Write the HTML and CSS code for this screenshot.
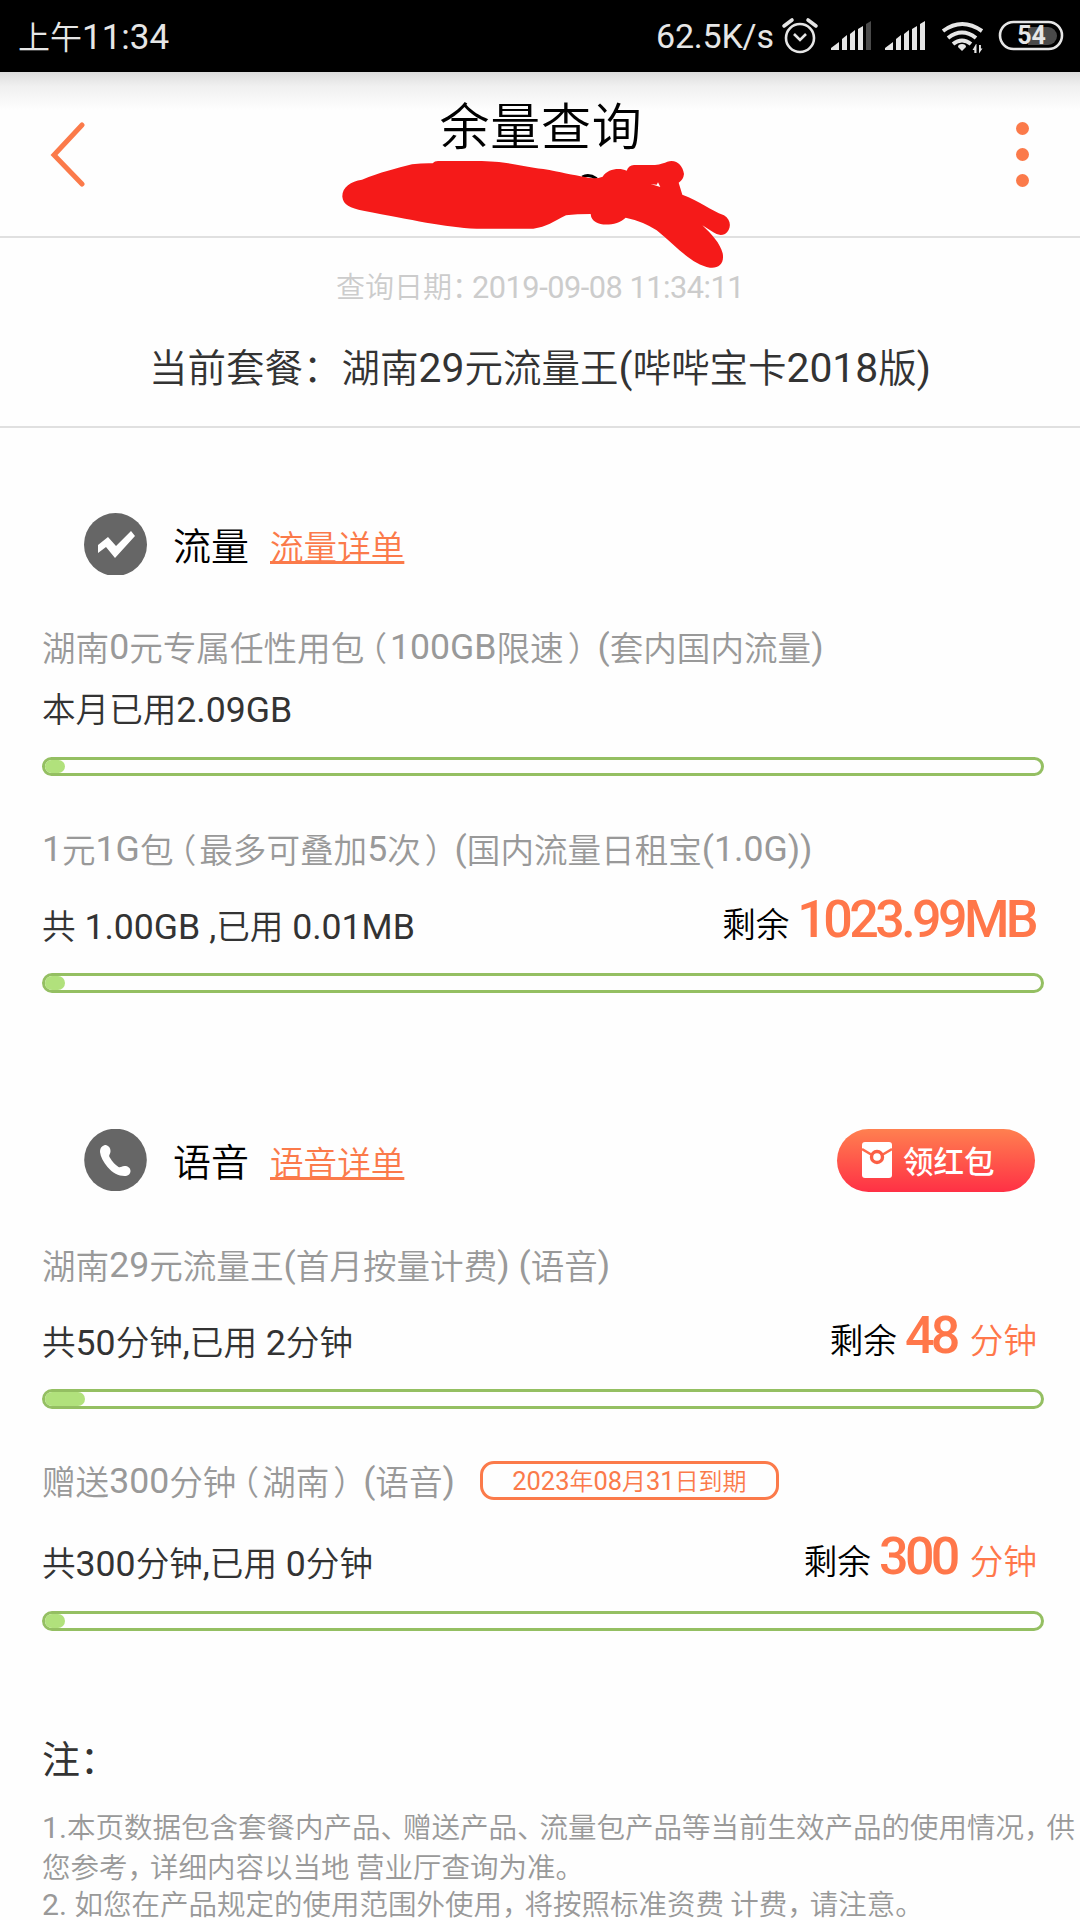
FILE: index.html
```html
<!DOCTYPE html>
<html lang="zh-CN">
<head>
<meta charset="utf-8">
<title>余量查询</title>
<link rel="stylesheet" href="styles.css">
</head>
<body>
<div class="status">
  <span class="clock">上午<span class="n">11:34</span></span>
  <span class="speed">62.5K/s</span>
  <svg class="status-icons" width="274" height="72" viewBox="0 0 274 72" fill="none" stroke="#e6e6e6">
    <circle cx="14" cy="38" r="14" stroke-width="2.6"/>
    <path d="M8 34l6 6 6-6" stroke-width="2.6"/>
    <path d="M-2 26l8-6M30 26l-8-6" stroke-width="3.6" stroke-linecap="round"/>
    <g fill="#e6e6e6" stroke="none">
      <path d="M45 50v-2l8-6v8zM56 39l5-4v15h-5zM64 34l5-4v20h-5zM72 29l5-3v24h-5z"/>
      <path fill="#4a4a4a" d="M80 24l5-3v29h-5z"/>
      <path d="M99 50v-2l8-6v8zM110 39l5-4v15h-5zM118 34l5-4v20h-5zM126 29l5-3v24h-5zM134 24l5-3v29h-5z"/>
      <path d="M176 44q4 0 4 3l-4 4-4-4q0-3 4-3z"/>
      <path d="M190 44l-3.500 6h1.800v3h2.200V44zM193 45v8.500l3.500-5h-1.600v-3.500z"/>
    </g>
    <path d="M157 31q19-14 39 0M162 38q14-11 28 0M167 44q9-7 18 0" stroke-width="4"/>
    <rect x="214" y="22" width="62" height="27" rx="13.5" stroke-width="2.6"/>
  </svg>
  <div class="battery">54</div>
</div>

<header class="header">
  <svg class="back" width="40" height="66" viewBox="0 0 40 66"><path d="M34 4L6 34l28 29" fill="none" stroke="#fb7a4a" stroke-width="5" stroke-linecap="round"/></svg>
  <h1>余量查询</h1>
  <div class="more"><i></i><i></i><i></i></div>
  <svg class="scribble" width="420" height="240" viewBox="0 0 1260 720">
    <path d="M757 291Q776 280 800 296" fill="none" stroke="#000" stroke-width="9"/>
    <path fill="#f51a19" fill-rule="evenodd" d="M37 350C36 322 62 304 96 299C150 277 200 265 246 253Q280 249 308 250Q314 243 324 243H440C530 243 570 258 640 267C690 276 730 285 765 291Q795 299 818 290C832 267 868 262 890 272Q896 256 912 255H975Q1000 251 1012 245C1040 237 1058 256 1062 282Q1060 300 1046 308L1057 344C1110 364 1140 389 1182 406C1206 420 1204 450 1185 462Q1168 470 1150 457L1117 436C1146 463 1170 490 1178 520C1184 552 1165 566 1140 563C1084 553 1040 500 980 451Q940 424 887 413C866 434 820 440 798 427Q783 418 782 402Q740 402 708 406C670 424 650 442 610 446H440C340 441 250 420 100 392C60 384 39 374 37 350ZM962 312L980 314 984 307 991 321Z"/>
  </svg>
</header>

<section class="plan">
  <p class="date">查询日期<span class="colon">：</span><span class="n">2019-09-08 11:34:11</span></p>
  <p class="name">当前套餐：湖南<span class="n">29</span>元流量王<span class="n">(</span>哔哔宝卡<span class="n">2018</span>版<span class="n">)</span></p>
</section>

<main>
  <div class="head">
    <svg width="63" height="62" viewBox="0 0 63 62"><circle cx="31.5" cy="31.5" r="31.5" fill="#666"/><path d="M14 32L24 24l8 9L47 18l4 5-20 22-9-11-8 6z" fill="#fff"/></svg>
    <h2>流量</h2><a>流量详单</a>
  </div>
  <p class="desc">湖南<span class="n">0</span>元专属任性用包<span class="fl">（</span><span class="n">100GB</span>限速<span class="fr">）</span><span class="n">(</span>套内国内流量<span class="n">)</span></p>
  <div class="row used-only"><span>本月已用<span class="n">2.09GB</span></span></div>
  <div class="bar short"><i style="width:20px"></i></div>

  <p class="desc second"><span class="n">1</span>元<span class="n">1G</span>包<span class="fl">（</span>最多可叠加<span class="n">5</span>次<span class="fr">）</span><span class="n">(</span>国内流量日租宝<span class="n">(1.0G))</span></p>
  <div class="row"><span>共<span class="n"> 1.00GB ,</span>已用<span class="n"> 0.01MB</span></span><span class="left">剩余<b>1023.99MB</b></span></div>
  <div class="bar"><i style="width:20px"></i></div>

  <div class="head voice">
    <svg width="63" height="62" viewBox="0 0 63 62"><circle cx="31.5" cy="31" r="31.3" fill="#666"/><path d="M16 23c0-5 3-7 6-7 3 1 4.500 3 4.500 6 0 3-2 4-1 6 3 5 6 8 9 10 2 1 3-1 6-1 3.500 0 6 2 6 5 0 3-2.500 5-6 5-6 0-12-3-17-9-4-5-7-10-7.500-15z" fill="#fff"/></svg>
    <h2>语音</h2><a>语音详单</a>
    <button><svg width="30" height="36" viewBox="0 0 30 36"><rect width="30" height="36" rx="3" fill="#fff"/><path d="M0 7l10 6M30 7l-10 6" stroke="#fd6a4a" stroke-width="2.5"/><circle cx="15" cy="15" r="5.500" fill="#fff" stroke="#fb5f45" stroke-width="3.4"/></svg>领红包</button>
  </div>
  <p class="desc tight">湖南<span class="n">29</span>元流量王<span class="n">(</span>首月按量计费<span class="n">) (</span>语音<span class="n">)</span></p>
  <div class="row"><span>共<span class="n">50</span>分钟<span class="n">,</span>已用<span class="n"> 2</span>分钟</span><span class="left">剩余<b>48</b><em>分钟</em></span></div>
  <div class="bar"><i style="width:40px"></i></div>

  <p class="desc">赠送<span class="n">300</span>分钟<span class="fl">（</span>湖南<span class="fr">）</span><span class="n">(</span>语音<span class="n">)</span><span class="tag"><span class="n">2023</span>年<span class="n">08</span>月<span class="n">31</span>日到期</span></p>
  <div class="row last"><span>共<span class="n">300</span>分钟<span class="n">,</span>已用<span class="n"> 0</span>分钟</span><span class="left">剩余<b>300</b><em>分钟</em></span></div>
  <div class="bar"><i style="width:20px"></i></div>

  <h3>注：</h3>
  <div class="notes">
    <p><span class="n">1.</span>本页数据包含套餐内产品<span class="pt">、</span>赠送产品<span class="pt">、</span>流量包产品等当前生效产品的使用情况<span class="pt">，</span>供</p>
    <p>您参考<span class="pt">，</span>详细内容以当地 营业厅查询为准。</p>
    <p><span class="n">2. </span>如您在产品规定的使用范围外使用<span class="pt">，</span>将按照标准资费 计费<span class="pt">，</span>请注意。</p>
  </div>
</main>
</body>
</html>
```
FILE: styles.css
```css
* { box-sizing: border-box; }
body, h1, h2, h3, p { margin: 0; font-weight: 350; }
body {
  width: 1080px;
  height: 1920px;
  overflow: hidden;
  background: #fefefe;
  color: #333;
  font-family: "Noto Sans CJK SC", sans-serif;
  white-space: nowrap;
}
.n {
  font-family: Roboto, sans-serif;
  font-size: 1.06em;
  font-weight: 400;
  letter-spacing: 0;
  white-space: pre;
}

/* status bar */
.status {
  position: relative;
  display: flex;
  align-items: center;
  height: 72px;
  padding-left: 18px;
  background: #000;
  color: #e6e6e6;
}
.clock { width: 638px; font-size: 32px; line-height: 72px; }
.clock .n { font-size: 35px; }
.speed { width: 130px; font: 400 34px/76px Roboto, sans-serif; letter-spacing: -0.2px; }
.status-icons { overflow: visible; }
.battery {
  position: absolute;
  left: 1006px;
  top: 27px;
  width: 51px;
  height: 18px;
  border-radius: 9px;
  background: linear-gradient(90deg, transparent 22px, #4a4a4a 22px);
  font: 700 25px/18px Roboto, sans-serif;
  text-align: center;
}

/* page header */
.header {
  position: relative;
  display: flex;
  justify-content: space-between;
  height: 166px;
  padding: 0 51px 0 48px;
  border-bottom: 2px solid #e0e0e0;
  background: linear-gradient(#dcdcdc, #f0f0f0 14px, #fefefe 38px);
}
.back { margin-top: 49px; }
h1 { margin: 21px 0 0 5px; font-size: 50px; line-height: 60px; letter-spacing: 0.8px; color: #000; }
.more { width: 40px; padding: 50px 0 0 27px; display: flex; flex-direction: column; gap: 13px; }
.more i { width: 13px; height: 13px; border-radius: 50%; background: #fb7a4a; }
.scribble { position: absolute; left: 330px; top: 8px; z-index: 1; }

/* current plan */
.plan {
  height: 190px;
  padding-top: 27px;
  border-bottom: 2px solid #e0e0e0;
  text-align: center;
}
.date { font-size: 29px; line-height: 40px; color: #ccc; }
.date .n { letter-spacing: -0.016em; }
.colon { letter-spacing: -9px; }
.name { font-size: 38.5px; line-height: 60px; margin-top: 27px; }

main { padding: 85px 36px 0 42px; font-size: 33.6px; line-height: 40px; }
.head { display: flex; align-items: center; height: 62px; padding: 0 9px 0 42px; }
.head h2 { width: 97px; margin-left: 26px; font-size: 38px; color: #000; }
.head a {
  color: #fb7a4a;
  margin-top: 3px;
  text-decoration: underline;
  text-decoration-thickness: 3px;
  text-underline-offset: 1px;
  text-decoration-skip-ink: none;
}
.head.voice { margin-top: 136px; }
.head button {
  display: flex;
  align-items: center;
  gap: 11px;
  width: 198px;
  height: 63px;
  margin-left: auto;
  padding: 0 0 0 25px;
  border: 0;
  border-radius: 32px;
  background: linear-gradient(#ff8050, #ff3045);
  color: #fff;
  font: 500 30.5px/40px "Noto Sans CJK SC", sans-serif;
}

.desc { display: flex; height: 40px; margin-top: 52px; color: #999; }
.desc.second { margin-top: 53px; }
.desc.tight { margin-top: 54px; }
.fl, .fr { font-feature-settings: "halt"; }
.fl { margin: 0 3px 0 6px; }
.fr { margin: 0 13px 0 4px; }
.row { display: flex; justify-content: space-between; height: 40px; margin: 36px 7px 28px 0; }
.row.used-only { margin: 21px 0 29px; }
.row.last { margin: 41px 7px 29px 0; }
.left { display: flex; align-items: baseline; margin-top: -5px; height: 40px; color: #000; }
.left b {
  margin-left: 8px;
  color: #ff774a;
  font: 500 52px/40px Roboto, sans-serif;
  letter-spacing: -3.6px;
}
.left b:last-child { margin-right: 2px; }
.left em { margin-left: 13px; color: #ff774a; font-style: normal; }
.bar { height: 20px; border: 3px solid #94bf62; border-radius: 10px; width: 1002px; }
.bar.short { height: 19px; }
.bar i { display: block; height: 100%; border-radius: 7px; background: #b1e17c; }
.tag {
  align-self: center;
  width: 299px;
  height: 39px;
  margin: -2px 0 0 25px;
  border: 3px solid #fb7a4a;
  border-radius: 14px;
  color: #fb7a4a;
  font-size: 24px;
  line-height: 31px;
  text-align: center;
}

h3 { margin-top: 106px; font-size: 38px; font-weight: 400; line-height: 40px; }
.notes { margin-top: 30px; color: #999; font-size: 28.5px; line-height: 37.7px; }
.pt { letter-spacing: -6px; }
```
